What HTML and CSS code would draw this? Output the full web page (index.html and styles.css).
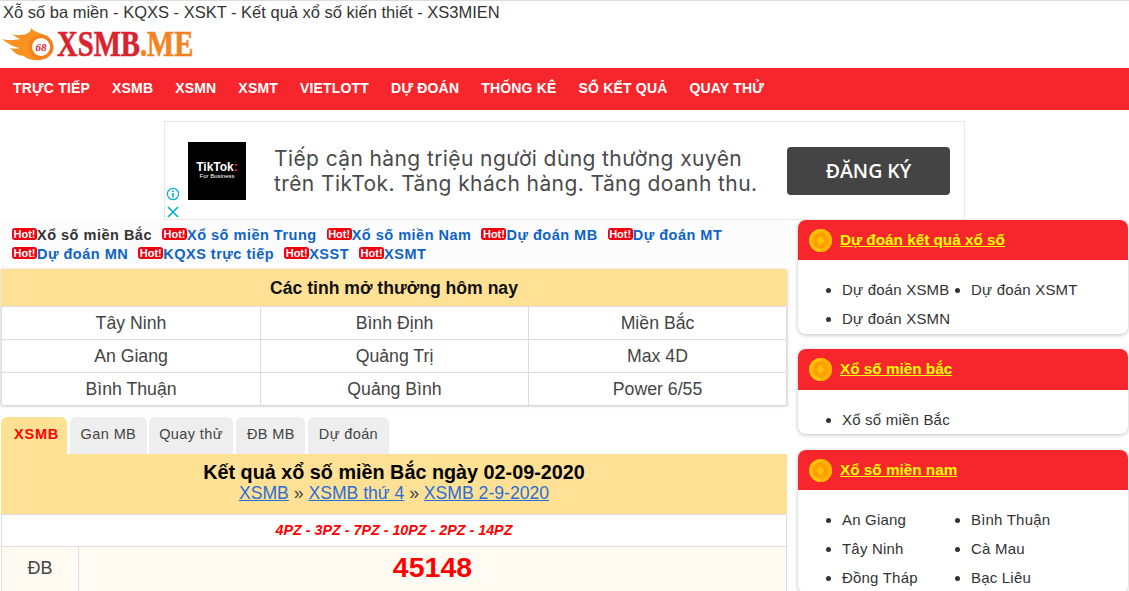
FILE: index.html
```html
<!DOCTYPE html>
<html lang="vi">

<head>
    <meta charset="UTF-8">
    <meta name="viewport" content="width=device-width, initial-scale=1.0">
    <title>XSMB.ME</title>
    <link rel="stylesheet" href="styles.css">
</head>

<body>
    <div class="page">
        <div class="site-title">Xỗ số ba miền - KQXS - XSKT - Kết quả xổ số kiến thiết - XS3MIEN</div>
        <div class="logo">
            <svg class="logo-mark" width="58" height="36" viewBox="0 0 58 36">
                <path d="M31 1C34 5 41 6 47 9C52 13 54 20 52 26L41 33C35 34 28 33 24 29C19 29 14 26 10 21C14 22 17 22 20 21C13 20 7 16 2 12C9 14 15 13 20 12C16 10 14 9 12 7C17 9 23 8 26 7C29 6 31 4 31 1Z" fill="#f7931e"/>
                <circle cx="41" cy="20" r="12.5" fill="#f58220"/>
                <circle cx="41" cy="20" r="9" fill="#fff"/>
                <text class="logo-num" x="41" y="24" text-anchor="middle">68</text>
            </svg>
            <span class="logo-text">XSMB<span class="logo-me">.ME</span></span>
        </div>

        <nav class="topnav">
            <a>TRỰC TIẾP</a>
            <a>XSMB</a>
            <a>XSMN</a>
            <a>XSMT</a>
            <a>VIETLOTT</a>
            <a>DỰ ĐOÁN</a>
            <a>THỐNG KÊ</a>
            <a>SỔ KẾT QUẢ</a>
            <a>QUAY THỬ</a>
        </nav>

        <div class="ad">
            <div class="ad-logo">
                <span class="ad-logo-name">TikTok<i>:</i></span>
                <span class="ad-logo-sub">For Business</span>
            </div>
            <p class="ad-text">Tiếp cận hàng triệu người dùng thường xuyên<br>trên TikTok. Tăng khách hàng. Tăng doanh thu.</p>
            <div class="ad-btn">ĐĂNG KÝ</div>
            <div class="ad-choices">
                <svg width="14" height="14" viewBox="0 0 14 14">
                    <circle cx="7" cy="7" r="5.6" fill="none" stroke="#00aecd" stroke-width="1.2"/>
                    <rect x="6.2" y="6" width="1.6" height="4.4" fill="#00aecd"/>
                    <rect x="6.2" y="3.5" width="1.6" height="1.6" fill="#00aecd"/>
                </svg>
                <svg width="14" height="14" viewBox="0 0 14 14">
                    <path d="M2 2L12 12M12 2L2 12" stroke="#00aecd" stroke-width="1.6" fill="none"/>
                </svg>
            </div>
        </div>

        <div class="columns">
            <main class="main">
                <div class="hot-links">
                    <a class="dark"><b class="hot">Hot!</b>Xổ số miền Bắc</a>
                    <a><b class="hot">Hot!</b>Xổ số miền Trung</a>
                    <a><b class="hot">Hot!</b>Xổ số miền Nam</a>
                    <a><b class="hot">Hot!</b>Dự đoán MB</a>
                    <a><b class="hot">Hot!</b>Dự đoán MT</a>
                    <a><b class="hot">Hot!</b>Dự đoán MN</a>
                    <a><b class="hot">Hot!</b>KQXS trực tiếp</a>
                    <a><b class="hot">Hot!</b>XSST</a>
                    <a><b class="hot">Hot!</b>XSMT</a>
                </div>

                <div class="today">
                    <div class="today-head">Các tỉnh mở thưởng hôm nay</div>
                    <div class="today-grid">
                        <div>Tây Ninh</div>
                        <div>Bình Định</div>
                        <div>Miền Bắc</div>
                        <div>An Giang</div>
                        <div>Quảng Trị</div>
                        <div>Max 4D</div>
                        <div>Bình Thuận</div>
                        <div>Quảng Bình</div>
                        <div>Power 6/55</div>
                    </div>
                </div>

                <div class="tabs">
                    <div class="tab active">XSMB</div>
                    <div class="tab">Gan MB</div>
                    <div class="tab">Quay thử</div>
                    <div class="tab">ĐB MB</div>
                    <div class="tab">Dự đoán</div>
                </div>

                <div class="result">
                    <div class="result-head">
                        <h2>Kết quả xổ số miền Bắc ngày 02-09-2020</h2>
                        <div class="crumbs"><a>XSMB</a> » <a>XSMB thứ 4</a> » <a>XSMB 2-9-2020</a></div>
                    </div>
                    <div class="codes">4PZ - 3PZ - 7PZ - 10PZ - 2PZ - 14PZ</div>
                    <div class="prize">
                        <div class="prize-name">ĐB</div>
                        <div class="prize-num">45148</div>
                    </div>
                </div>
            </main>

            <aside class="side">
                <section class="box">
                    <h3 class="box-head">
                        <svg class="coin" width="23" height="23" viewBox="0 0 24 24">
                            <circle cx="12" cy="12" r="12" fill="#ffc400"/>
                            <path d="M12 0A12 12 0 0 1 12 24Z" fill="#ffb300"/>
                            <circle cx="12" cy="12" r="8.5" fill="#ffa000"/>
                            <path d="M12 7L16 12L12 17L8 12Z" fill="#ffc400"/>
                        </svg>
                        <a>Dự đoán kết quả xổ số</a>
                    </h3>
                    <ul class="box-list">
                        <li>Dự đoán XSMB</li>
                        <li>Dự đoán XSMT</li>
                        <li>Dự đoán XSMN</li>
                    </ul>
                </section>
                <section class="box">
                    <h3 class="box-head">
                        <svg class="coin" width="23" height="23" viewBox="0 0 24 24">
                            <circle cx="12" cy="12" r="12" fill="#ffc400"/>
                            <path d="M12 0A12 12 0 0 1 12 24Z" fill="#ffb300"/>
                            <circle cx="12" cy="12" r="8.5" fill="#ffa000"/>
                            <path d="M12 7L16 12L12 17L8 12Z" fill="#ffc400"/>
                        </svg>
                        <a>Xổ số miền bắc</a>
                    </h3>
                    <ul class="box-list">
                        <li>Xổ số miền Bắc</li>
                    </ul>
                </section>
                <section class="box">
                    <h3 class="box-head">
                        <svg class="coin" width="23" height="23" viewBox="0 0 24 24">
                            <circle cx="12" cy="12" r="12" fill="#ffc400"/>
                            <path d="M12 0A12 12 0 0 1 12 24Z" fill="#ffb300"/>
                            <circle cx="12" cy="12" r="8.5" fill="#ffa000"/>
                            <path d="M12 7L16 12L12 17L8 12Z" fill="#ffc400"/>
                        </svg>
                        <a>Xổ số miền nam</a>
                    </h3>
                    <ul class="box-list">
                        <li>An Giang</li>
                        <li>Bình Thuận</li>
                        <li>Tây Ninh</li>
                        <li>Cà Mau</li>
                        <li>Đồng Tháp</li>
                        <li>Bạc Liêu</li>
                    </ul>
                </section>
            </aside>
        </div>
    </div>
</body>

</html>
```

FILE: styles.css
```css
* {
    margin: 0;
    padding: 0;
    box-sizing: border-box;
}

html,
body {
    height: 591px;
    overflow: hidden;
}

body {
    background-color: #fff;
    color: #333;
    font-family: "Liberation Sans", Arial, sans-serif;
}

.page {
    width: 1129px;
    border-top: 1px solid #ddd;
}

.site-title {
    height: 23px;
    padding-left: 3px;
    font-size: 16.5px;
    line-height: 23px;
    color: #333;
}

.logo {
    display: flex;
    align-items: center;
    height: 44px;
    padding-bottom: 3px;
}

.logo-mark {
    flex: none;
}

.logo-num {
    font-family: "Liberation Serif", serif;
    font-size: 11px;
    font-weight: bold;
    font-style: italic;
    fill: #d9232e;
}

.logo-text {
    display: inline-block;
    margin-left: -1px;
    font-family: "Liberation Serif", serif;
    font-size: 35px;
    font-weight: bold;
    line-height: 36px;
    color: #d9232e;
    transform: scaleX(0.82);
    transform-origin: left center;
    -webkit-text-stroke: 0.6px currentColor;
}

.logo-me {
    color: #f58220;
}

.topnav {
    display: flex;
    align-items: center;
    gap: 22px;
    height: 42px;
    padding: 0 13px 2px;
    background-color: #f6262c;
}

.topnav a {
    color: #fff;
    font-size: 14px;
    font-weight: bold;
    letter-spacing: 0.18px;
}

.ad {
    position: relative;
    display: flex;
    align-items: center;
    width: 801px;
    height: 99px;
    margin: 11px 0 0 164px;
    padding-left: 23px;
    background-color: #fff;
    border: 1px solid #e8e8e8;
}

.ad-logo {
    display: flex;
    flex-direction: column;
    align-items: center;
    justify-content: center;
    flex: none;
    width: 58px;
    height: 58px;
    background-color: #000;
    color: #fff;
}

.ad-logo-name {
    font-size: 12px;
    font-weight: bold;
    line-height: 11px;
}

.ad-logo-name i {
    font-style: normal;
    color: #fe2c55;
}

.ad-logo-sub {
    font-size: 6px;
    line-height: 7px;
}

.ad-text {
    flex: none;
    width: 513px;
    margin: 1px 0 0 28px;
    font-family: Inter, sans-serif;
    font-size: 21px;
    line-height: 25px;
    letter-spacing: 0.4px;
    color: #4a4a4a;
}

.ad-btn {
    display: flex;
    align-items: center;
    justify-content: center;
    width: 163px;
    height: 48px;
    border-radius: 4px;
    background-color: #444;
    color: #fff;
    font-family: "Open Sans", sans-serif;
    font-size: 19.5px;
    font-weight: 600;
}

.ad-choices {
    position: absolute;
    left: 1px;
    bottom: 0;
    display: flex;
    flex-direction: column;
    gap: 4px;
}

.columns {
    display: grid;
    grid-template-columns: 786px 330px;
    column-gap: 11px;
    padding-left: 1px;
}

.hot-links {
    display: flex;
    flex-wrap: wrap;
    align-content: flex-start;
    column-gap: 10px;
    height: 49px;
    padding: 6px 8px 0 11px;
    background-color: #fcfcfc;
    font-size: 14.5px;
    font-weight: bold;
    line-height: 19px;
    letter-spacing: 0.5px;
    color: #0e63c7;
}

.hot-links a {
    height: 19px;
}

.hot-links .dark {
    color: #333;
}

.hot {
    display: inline-block;
    width: 25px;
    height: 12px;
    border-radius: 3px;
    background-color: #f0000f;
    color: #fff;
    font-size: 11px;
    line-height: 12px;
    letter-spacing: 0;
    text-align: center;
    vertical-align: 2px;
}

.today {
    box-shadow: 0 1px 3px rgba(0, 0, 0, 0.25);
}

.today-head {
    height: 37px;
    background-color: #ffe196;
    color: #111;
    font-size: 17.6px;
    font-weight: bold;
    line-height: 38px;
    text-align: center;
}

.today-grid {
    display: grid;
    grid-template-columns: 259px 268px 1fr;
    grid-auto-rows: 33px;
    background-color: #fff;
    border-left: 1px solid #ddd;
}

.today-grid div {
    border-top: 1px solid #ddd;
    border-right: 1px solid #ddd;
    font-size: 17.7px;
    line-height: 32px;
    text-align: center;
    color: #444;
}

.tabs {
    display: flex;
    gap: 2px;
    height: 37px;
    margin-top: 12px;
}

.tab {
    padding: 0 10.5px;
    border-radius: 6px 6px 0 0;
    background-color: #eee;
    color: #444;
    font-size: 14.5px;
    line-height: 35px;
    letter-spacing: 0.4px;
}

.tab:nth-child(2),
.tab:nth-child(n+4) {
    margin-left: 1px;
}

.tab.active {
    padding: 0 8px 0 13px;
    background-color: #ffe196;
    color: #f00;
    font-weight: bold;
    letter-spacing: 0.8px;
}

.result-head {
    height: 60px;
    padding-top: 7px;
    background-color: #ffe196;
    text-align: center;
}

.result-head h2 {
    color: #000;
    font-size: 19.8px;
    line-height: 22px;
}

.crumbs {
    color: #444;
    font-size: 17.6px;
    line-height: 20px;
}

.crumbs a {
    color: #2a6fd6;
    text-decoration: underline;
}

.codes {
    height: 33px;
    border: 1px solid #ddd;
    color: #f00;
    font-size: 14.3px;
    font-style: italic;
    font-weight: bold;
    line-height: 30px;
    text-align: center;
}

.prize {
    display: grid;
    grid-template-columns: 77px 1fr;
    height: 44px;
    background-color: #fffbf2;
    border-left: 1px solid #ddd;
    border-right: 1px solid #ddd;
}

.prize-name {
    border-right: 1px solid #ddd;
    font-size: 18px;
    line-height: 42px;
    text-align: center;
    color: #444;
}

.prize-num {
    color: #f00;
    font-size: 28.5px;
    font-weight: bold;
    line-height: 40px;
    text-align: center;
}

.box {
    margin-bottom: 15px;
    border-radius: 8px;
    background-color: #fff;
    box-shadow: 0 1px 4px rgba(0, 0, 0, 0.25);
}

.box:nth-child(2) {
    margin-bottom: 16px;
}

.box-head {
    display: flex;
    align-items: center;
    gap: 8px;
    height: 40px;
    padding-left: 11px;
    border-radius: 8px 8px 0 0;
    background-color: #f6262c;
    font-size: 15.3px;
}

.box:nth-child(2) .box-head {
    height: 41px;
}

.box-head a {
    padding-bottom: 1px;
    color: #ff0;
    text-decoration: underline;
}

.box-list {
    display: grid;
    grid-template-columns: 129px 129px;
    grid-auto-rows: 29px;
    padding: 15px 0 1px 44px;
    color: #333;
    font-size: 15px;
    line-height: 29px;
    letter-spacing: 0.2px;
}

.box:nth-child(2) .box-list {
    padding-bottom: 0;
}
```
